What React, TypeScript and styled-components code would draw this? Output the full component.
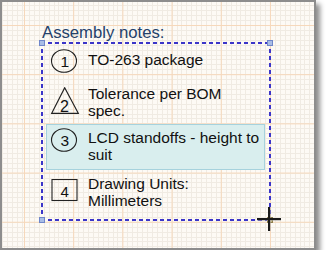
import React from "react";
import styled, { createGlobalStyle } from "styled-components";

const GlobalStyle = createGlobalStyle`
  html, body {
    margin: 0;
    padding: 0;
    background: #fff;
  }
  body {
    font-family: "Liberation Sans", Arial, sans-serif;
  }
`;

const Frame = styled.div`
  box-sizing: border-box;
  width: 316px;
  height: 250px;
  border: 2px solid #8d8d8d;
  box-shadow: 4px 4px 5px rgba(0, 0, 0, 0.45);
  padding: 22px 0 0 39px;
  background-color: #fdfaf5;
  background-image: linear-gradient(90deg, #f6d8bb 1px, transparent 1px),
    linear-gradient(180deg, #f6d8bb 1px, transparent 1px),
    repeating-linear-gradient(90deg, #f0ebe3 0 1px, transparent 1px 4.92px),
    repeating-linear-gradient(180deg, #f0ebe3 0 1px, transparent 1px 4.92px);
  background-size: 49.2px 49.2px, 49.2px 49.2px, auto, auto;
  background-position: 22px 0, 0 23px, 22px 0, 0 23px;
`;

const Note = styled.div`
  position: relative;
  width: 230px;
`;

const Title = styled.div`
  padding-left: 1px;
  font-size: 16.7px;
  line-height: 17px;
  color: #24416a;
  white-space: nowrap;
`;

const dash = "#3b35c9";

const Selection = styled.div`
  box-sizing: border-box;
  position: relative;
  margin-top: 1px;
  height: 179px;
  padding: 4px 6px 0 5px;
  display: flex;
  flex-direction: column;
  background:
    repeating-linear-gradient(90deg, ${dash} 0 4px, transparent 4px 7px) 0 0 / 100% 2px no-repeat,
    repeating-linear-gradient(90deg, ${dash} 0 4px, transparent 4px 7px) 0 100% / 100% 2px no-repeat,
    repeating-linear-gradient(180deg, ${dash} 0 4px, transparent 4px 7px) 0 0 / 2px 100% no-repeat,
    repeating-linear-gradient(180deg, ${dash} 0 4px, transparent 4px 7px) 100% 0 / 2px 100% no-repeat;
`;

const Handle = styled.span<{ $x: "left" | "right"; $y: "top" | "bottom"; $warm?: boolean }>`
  position: absolute;
  ${(p) => p.$x}: -2px;
  ${(p) => p.$y}: -2px;
  box-sizing: border-box;
  width: 6px;
  height: 6px;
  background: ${(p) => (p.$warm ? "#c9bb86" : "#a9bde6")};
  border: 1px solid ${(p) => (p.$warm ? "#8e8050" : "#6f86c9")};
`;

const Row = styled.div<{ $h: number; $active?: boolean }>`
  box-sizing: border-box;
  display: flex;
  align-items: flex-start;
  height: ${(p) => p.$h}px;
  padding-top: 4px;
  border: 1px solid ${(p) => (p.$active ? "#a6d2dd" : "transparent")};
  background: ${(p) => (p.$active ? "#d9eeee" : "transparent")};
`;

const IconCell = styled.div<{ $dy: number }>`
  flex: none;
  width: 34px;
  margin-top: ${(p) => p.$dy}px;
  display: flex;
`;

const Text = styled.div`
  margin-left: 7px;
  font-size: 15.5px;
  line-height: 17px;
  color: #111;
  white-space: nowrap;
`;

const Cursor = styled.svg`
  position: absolute;
  left: 215px;
  top: 182px;
  overflow: visible;
`;

type Shape = "circle" | "triangle" | "square";

const Badge: React.FC<{ shape: Shape; n: string }> = ({ shape, n }) => {
  const font = { fontFamily: "Liberation Sans, Arial, sans-serif", fill: "#111" };
  if (shape === "triangle") {
    return (
      <svg width="34" height="27">
        <polygon points="17.7,0.8 4.7,26.3 31.3,26.3" fill="none" stroke="#222" strokeWidth="1.2" />
        <text x="17.5" y="24.6" textAnchor="middle" fontSize="16" {...font}>
          {n}
        </text>
      </svg>
    );
  }
  if (shape === "square") {
    return (
      <svg width="34" height="23">
        <rect x="5" y="0.5" width="25" height="21" fill="none" stroke="#222" strokeWidth="1.1" />
        <text x="17.6" y="18" textAnchor="middle" fontSize="15" {...font}>
          {n}
        </text>
      </svg>
    );
  }
  return (
    <svg width="34" height="24">
      <ellipse cx="17" cy="12" rx="12.5" ry="11.3" fill="none" stroke="#222" strokeWidth="1.1" />
      <text x="17.8" y="17.6" textAnchor="middle" fontSize="15.5" {...font}>
        {n}
      </text>
    </svg>
  );
};

const notes: { n: string; shape: Shape; dy: number; h: number; lines: string[]; active?: boolean }[] = [
  { n: "1", shape: "circle", dy: -2, h: 34, lines: ["TO-263 package"] },
  { n: "2", shape: "triangle", dy: 2, h: 44, lines: ["Tolerance per BOM", "spec."] },
  { n: "3", shape: "circle", dy: -1, h: 46, lines: ["LCD standoffs - height to", "suit"], active: true },
  { n: "4", shape: "square", dy: 4, h: 46, lines: ["Drawing Units:", "Millimeters"] },
];

const App: React.FC = () => {
  return (
    <>
      <GlobalStyle />
      <Frame>
        <Note>
          <Title>Assembly notes:</Title>
          <Selection>
            <Handle $x="left" $y="top" />
            <Handle $x="right" $y="top" />
            <Handle $x="left" $y="bottom" />
            <Handle $x="right" $y="bottom" $warm />
            {notes.map((note) => (
              <Row key={note.n} $h={note.h} $active={note.active}>
                <IconCell $dy={note.dy}>
                  <Badge shape={note.shape} n={note.n} />
                </IconCell>
                <Text>
                  {note.lines.map((line, i) => (
                    <div key={i}>{line}</div>
                  ))}
                </Text>
              </Row>
            ))}
          </Selection>
          <Cursor width="26" height="26" viewBox="0 0 26 26">
            <line x1="1" y1="14" x2="25" y2="14" stroke="#9a9a9a" strokeWidth="1" />
            <line x1="14" y1="1" x2="14" y2="25" stroke="#9a9a9a" strokeWidth="1" />
            <line x1="1" y1="13" x2="25" y2="13" stroke="#1a1a1a" strokeWidth="2" />
            <line x1="13" y1="1" x2="13" y2="25" stroke="#1a1a1a" strokeWidth="2" />
          </Cursor>
        </Note>
      </Frame>
    </>
  );
};

export default App;
